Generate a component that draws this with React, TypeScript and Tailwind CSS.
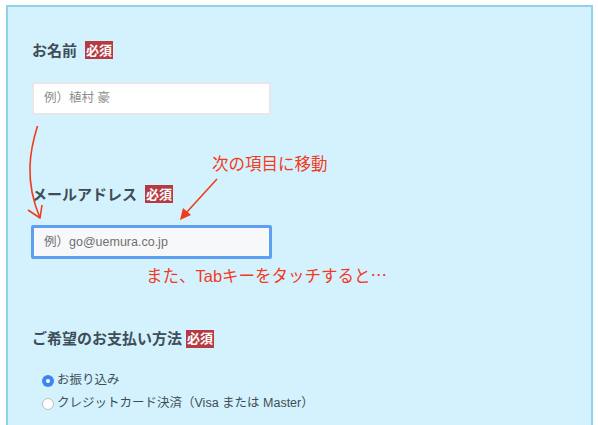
import React from "react";

const font = { fontFamily: '"Liberation Sans", "Noto Sans CJK JP", sans-serif' };

const Badge = () => (
  <span className="ml-2 inline-flex h-[18px] items-center bg-[#b63a42] px-[1px] text-[13px] font-bold leading-none text-white">
    必須
  </span>
);

const Label = ({ text, gap = true }: { text: string; gap?: boolean }) => (
  <div className="flex h-[18px] items-center">
    <span className="text-[15px] font-bold leading-none text-[#3d4e57]">{text}</span>
    {gap ? <Badge /> : <span className="-ml-1"><Badge /></span>}
  </div>
);

const Radio = ({ checked, label }: { checked?: boolean; label: string }) => (
  <label className="flex h-[23px] items-center gap-[3px] text-[12.5px] text-[#3d4e57]">
    {checked ? (
      <span className="flex h-[12px] w-[12px] items-center justify-center rounded-full bg-[#3b86f0]">
        <span className="h-[4px] w-[4px] rounded-full bg-white" />
      </span>
    ) : (
      <span className="h-[12px] w-[12px] rounded-full border border-[#b9bec2] bg-white" />
    )}
    {label}
  </label>
);

export default function App() {
  return (
    <div className="h-[425px] overflow-hidden bg-white pl-[6px] pr-[5px] pt-[5px]" style={font}>
      <div className="relative h-[440px] border-2 border-b-0 border-[#8fd2ec] bg-[#d4f2fd] pl-6 pt-[34px]">
        <Label text="お名前" />
        <div className="mt-[23px] flex h-[33px] w-[239px] items-center border-2 border-[#e6e7e8] bg-white pl-[10px] text-[12.5px] text-[#8c8c8c]">
          例）植村 豪
        </div>

        <div className="mt-[70px]">
          <Label text="メールアドレス" />
        </div>
        <div className="-ml-px mt-[22px] flex h-[34px] w-[241px] items-center rounded-[2px] border-[3px] border-[#5e9ff2] bg-[#f6f8fa] pl-[10px] text-[12.5px] text-[#707070]">
          例）go@uemura.co.jp
        </div>

        <div className="mt-[70px]">
          <Label text="ご希望のお支払い方法" gap={false} />
        </div>
        <div className="ml-[10px] mt-[22px] flex flex-col">
          <Radio checked label="お振り込み" />
          <Radio label="クレジットカード決済（Visa または Master）" />
        </div>

        <span className="absolute left-[204px] top-[149px] text-[16.5px] leading-none text-[#f23b1e]">
          次の項目に移動
        </span>
        <span className="absolute left-[138px] top-[260px] text-[16.5px] leading-none text-[#f23b1e]">
          また、Tabキーをタッチすると
          <span className="font-['Noto_Sans_CJK_JP',sans-serif]">…</span>
        </span>

        <svg className="pointer-events-none absolute left-[-8px] top-[-7px]" width="598" height="425">
          <path d="M37.5 126 C 30 150, 24 180, 40 218" fill="none" stroke="#f03c1c" strokeWidth="1.6" />
          <path d="M28 210 L40 218 L42 205" fill="none" stroke="#f03c1c" strokeWidth="1.6" strokeLinejoin="round" />
          <path d="M217 179 L186 213" fill="none" stroke="#f03c1c" strokeWidth="1.6" />
          <path d="M180 220 L183 208 L191 215 Z" fill="#f03c1c" />
        </svg>
      </div>
    </div>
  );
}
